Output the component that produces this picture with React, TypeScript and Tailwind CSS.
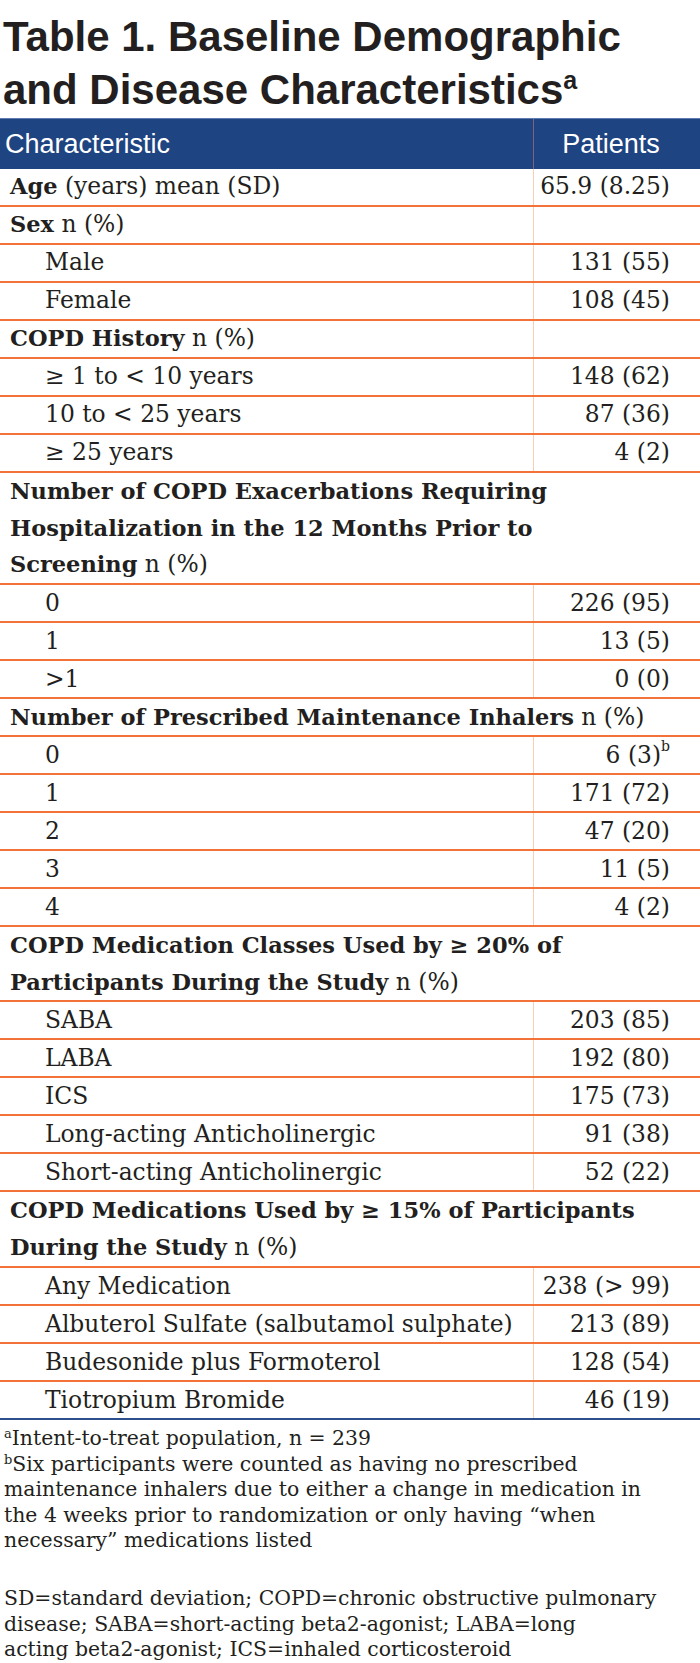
type Row =
  | { kind: "head"; bold: string; rest?: string; value?: string }
  | { kind: "item"; label: string; value: string; sup?: string }
  | { kind: "span"; lines: string[]; rest: string; leading: string };

const rows: Row[] = [
  { kind: "head", bold: "Age", rest: " (years) mean (SD)", value: "65.9 (8.25)" },
  { kind: "head", bold: "Sex", rest: " n (%)" },
  { kind: "item", label: "Male", value: "131 (55)" },
  { kind: "item", label: "Female", value: "108 (45)" },
  { kind: "head", bold: "COPD History", rest: " n (%)" },
  { kind: "item", label: "≥ 1 to < 10 years", value: "148 (62)" },
  { kind: "item", label: "10 to < 25 years", value: "87 (36)" },
  { kind: "item", label: "≥ 25 years", value: "4 (2)" },
  {
    kind: "span",
    lines: [
      "Number of COPD Exacerbations Requiring",
      "Hospitalization in the 12 Months Prior to",
      "Screening",
    ],
    rest: " n (%)",
    leading: "leading-[36.7px]",
  },
  { kind: "item", label: "0", value: "226 (95)" },
  { kind: "item", label: "1", value: "13 (5)" },
  { kind: "item", label: ">1", value: "0 (0)" },
  {
    kind: "span",
    lines: ["Number of Prescribed Maintenance Inhalers"],
    rest: " n (%)",
    leading: "leading-[36px]",
  },
  { kind: "item", label: "0", value: "6 (3)", sup: "b" },
  { kind: "item", label: "1", value: "171 (72)" },
  { kind: "item", label: "2", value: "47 (20)" },
  { kind: "item", label: "3", value: "11 (5)" },
  { kind: "item", label: "4", value: "4 (2)" },
  {
    kind: "span",
    lines: ["COPD Medication Classes Used by ≥ 20% of", "Participants During the Study"],
    rest: " n (%)",
    leading: "leading-[36.5px]",
  },
  { kind: "item", label: "SABA", value: "203 (85)" },
  { kind: "item", label: "LABA", value: "192 (80)" },
  { kind: "item", label: "ICS", value: "175 (73)" },
  { kind: "item", label: "Long-acting Anticholinergic", value: "91 (38)" },
  { kind: "item", label: "Short-acting Anticholinergic", value: "52 (22)" },
  {
    kind: "span",
    lines: ["COPD Medications Used by ≥ 15% of Participants", "During the Study"],
    rest: " n (%)",
    leading: "leading-[37px]",
  },
  { kind: "item", label: "Any Medication", value: "238 (> 99)" },
  { kind: "item", label: "Albuterol Sulfate (salbutamol sulphate)", value: "213 (89)" },
  { kind: "item", label: "Budesonide plus Formoterol", value: "128 (54)" },
  { kind: "item", label: "Tiotropium Bromide", value: "46 (19)" },
];

const serif = "font-['DejaVu_Serif',serif]";

function TableRow({ row, last }: { row: Row; last: boolean }) {
  const line = last ? "border-[#2d4f8e]" : "border-[#f2723a]";

  if (row.kind === "span") {
    return (
      <div className={`border-b-2 ${line} pl-[10px] ${row.leading} whitespace-nowrap`}>
        {row.lines.map((l, i) => (
          <div key={i}>
            <span className="text-[22.5px] font-bold">{l}</span>
            {i === row.lines.length - 1 && <span>{row.rest}</span>}
          </div>
        ))}
      </div>
    );
  }

  return (
    <div className={`flex h-[38px] border-b-2 ${line}`}>
      <div className="flex w-[533px] items-center whitespace-nowrap">
        {row.kind === "head" ? (
          <span className="pl-[10px]">
            <span className="text-[22.5px] font-bold">{row.bold}</span>
            {row.rest}
          </span>
        ) : (
          <span className="pl-[45px]">{row.label}</span>
        )}
      </div>
      <div className="flex flex-1 items-center justify-end border-l border-[#f8cfb6] pr-[30px] whitespace-nowrap">
        {row.value}
        {row.kind === "item" && row.sup && (
          <sup className="top-[-9px] text-[14px]">{row.sup}</sup>
        )}
      </div>
    </div>
  );
}

export default function App() {
  return (
    <div className="w-[700px] bg-white text-[#231f20]">
      <h1 className="pt-[10px] pl-[3px] font-['Liberation_Sans',Arial,sans-serif] text-[42px] font-bold leading-[53px]">
        Table 1. Baseline Demographic
        <br />
        and Disease Characteristics
        <sup className="top-[-15px] text-[25px]">a</sup>
      </h1>

      <div className="mt-[2px] flex h-[51px] border-t border-[#5f7db3] bg-[#1f4482] font-['Liberation_Sans',Arial,sans-serif] text-[27px] text-white">
        <div className="flex w-[533px] items-center pl-[5px]">Characteristic</div>
        <div className="flex flex-1 items-center justify-center border-l border-[#86607a] pr-[12px]">
          Patients
        </div>
      </div>

      <div className={`${serif} text-[23.4px]`}>
        {rows.map((row, i) => (
          <TableRow key={i} row={row} last={i === rows.length - 1} />
        ))}
      </div>

      <div className={`${serif} mt-[6px] pl-[4px] text-[20.4px] leading-[25.6px] whitespace-nowrap`}>
        <div>
          <sup className="top-[-7px] text-[13px]">a</sup>Intent-to-treat population, n = 239
        </div>
        <div>
          <sup className="top-[-7px] text-[13px]">b</sup>Six participants were counted as having no prescribed
        </div>
        <div>maintenance inhalers due to either a change in medication in</div>
        <div>the 4 weeks prior to randomization or only having “when</div>
        <div>necessary” medications listed</div>
        <div className="h-[32px]" />
        <div>SD=standard deviation; COPD=chronic obstructive pulmonary</div>
        <div>disease; SABA=short-acting beta2-agonist; LABA=long</div>
        <div>acting beta2-agonist; ICS=inhaled corticosteroid</div>
      </div>
    </div>
  );
}
